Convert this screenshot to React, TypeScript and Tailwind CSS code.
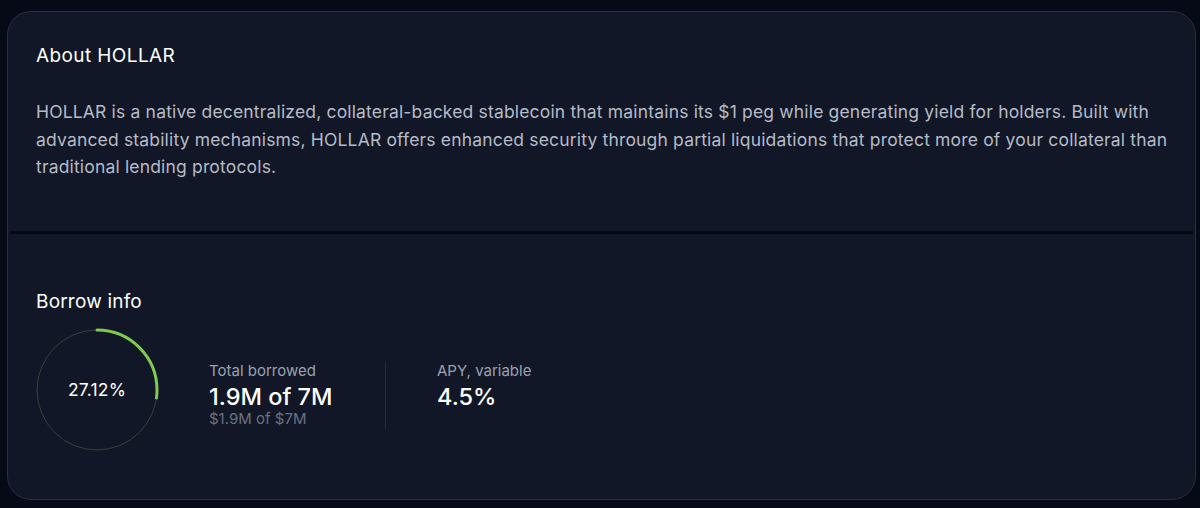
import React from 'react';

const BorrowGauge: React.FC<{ percent: number }> = ({ percent }) => {
  const r = 60;
  const c = 2 * Math.PI * r;
  const dash = (percent / 100) * c;
  return (
    <div className="relative w-[124px] h-[124px] shrink-0 -ml-[1px]">
      <svg width="124" height="124" viewBox="0 0 124 124" className="-rotate-90">
        <circle cx="62" cy="62" r={r} fill="none" stroke="#3a3f3c" strokeWidth="1" />
        <circle
          cx="62"
          cy="62"
          r={r}
          fill="none"
          stroke="#7dcb4f"
          strokeWidth="3"
          strokeLinecap="round"
          strokeDasharray={`${dash} ${c}`}
        />
      </svg>
      <div className="absolute inset-0 flex items-center justify-center text-[17.5px] text-white tracking-[0.2px]">
        {percent}%
      </div>
    </div>
  );
};

export default function App() {
  return (
    <div
      className="w-[1200px] h-[508px] bg-[#060a17] pt-[11px] pl-[7px] pr-[4px]"
      style={{ fontFamily: 'Inter, "Noto Sans", sans-serif' }}
    >
      <div className="h-[489px] rounded-[24px] border border-[#2a2f3e] bg-[#111726] flex flex-col overflow-hidden">
        {/* About */}
        <div className="pl-[28px] pr-[16px] pt-[31px] h-[219px]">
          <h2 className="text-[19px] leading-[26px] text-white tracking-[0.4px]">About HOLLAR</h2>
          <p className="mt-[29px] text-[17.5px] leading-[27.5px] text-[#b6bbc7] tracking-[0.17px]">
            HOLLAR is a native decentralized, collateral-backed stablecoin that maintains its $1 peg while generating
            yield for holders. Built with advanced stability mechanisms, HOLLAR offers enhanced security through partial
            liquidations that protect more of your collateral than traditional lending protocols.
          </p>
        </div>

        <div className="mx-[2px] h-[3px] bg-[#050914]" />

        {/* Borrow info */}
        <div className="pl-[28px] pt-[55px]">
          <h2 className="text-[19px] leading-[26px] text-white tracking-[0.2px]">Borrow info</h2>
          <div className="mt-[13px] flex items-start">
            <BorrowGauge percent={27.12} />
            <div className="ml-[50px] mt-[33px] flex items-start">
              <div className="w-[176px] flex flex-col">
                <span className="text-[15px] leading-[20px] text-[#9ca1ae]">Total borrowed</span>
                <span className="mt-[1px] text-[23.5px] leading-[30px] font-medium text-white">1.9M of 7M</span>
                <span className="-mt-[2px] text-[15px] leading-[18px] text-[#6b7080]">$1.9M of $7M</span>
              </div>
              <div className="w-px h-[68px] bg-[#262b39]" />
              <div className="ml-[51px] flex flex-col">
                <span className="text-[15px] leading-[20px] text-[#9ca1ae]">APY, variable</span>
                <span className="mt-[1px] text-[23.5px] leading-[30px] font-medium text-white">4.5%</span>
              </div>
            </div>
          </div>
        </div>
      </div>
    </div>
  );
}
